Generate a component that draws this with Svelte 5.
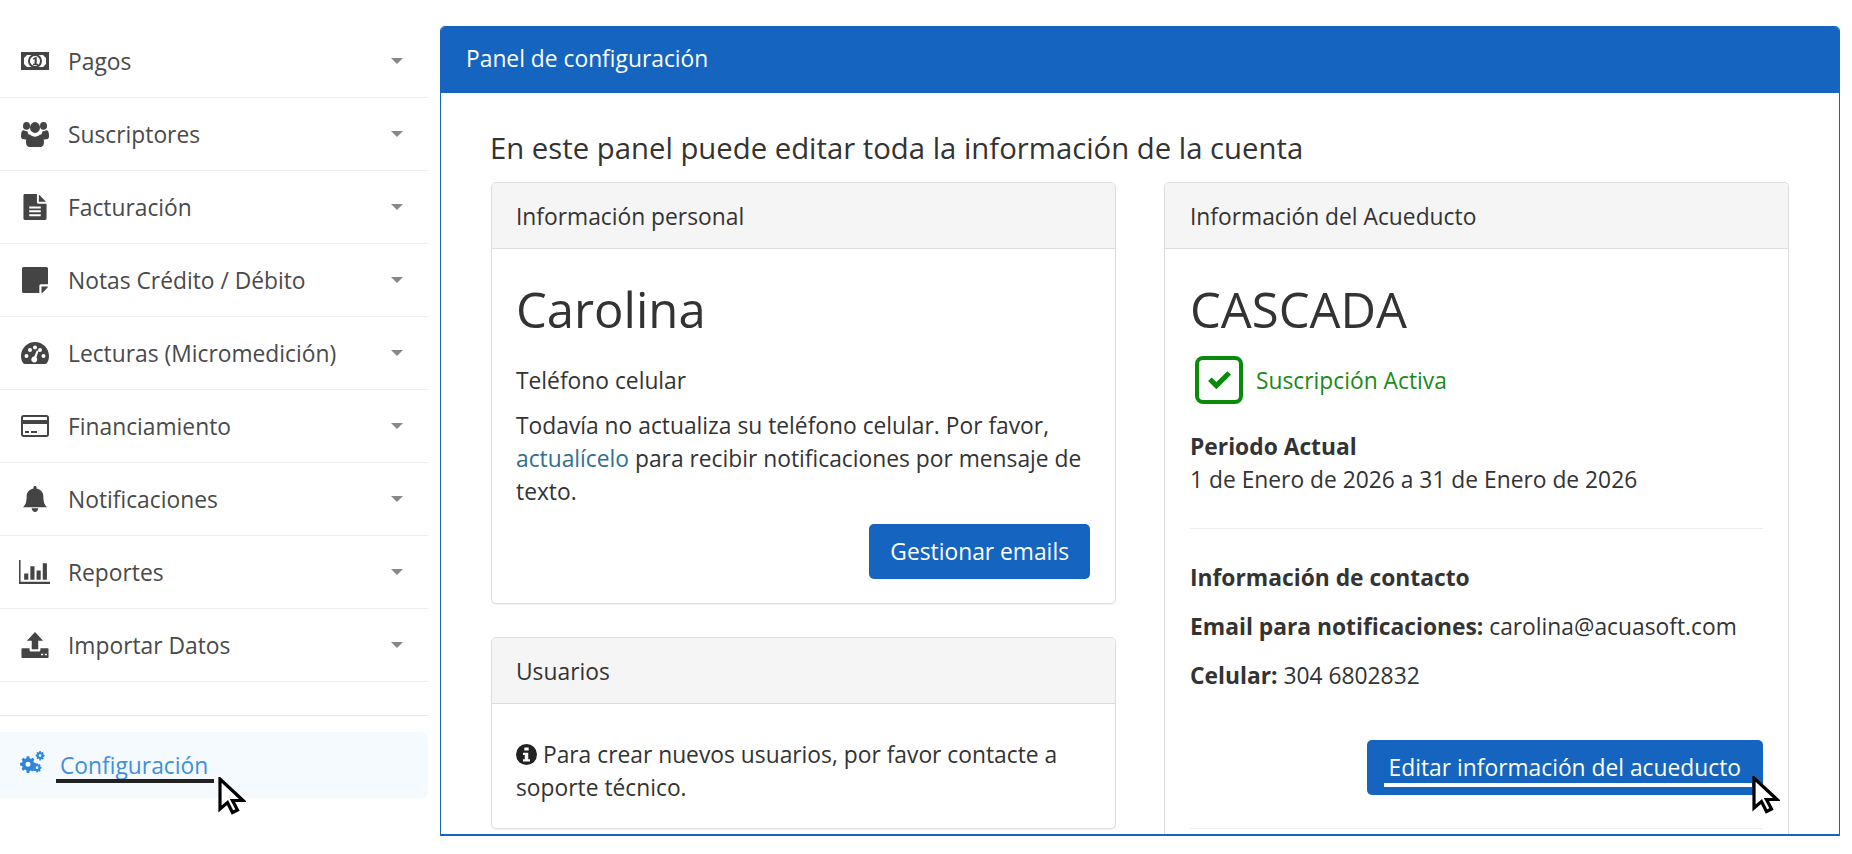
<script>
  const items = [
    { label: 'Pagos', icon: 'money' },
    { label: 'Suscriptores', icon: 'users' },
    { label: 'Facturación', icon: 'file' },
    { label: 'Notas Crédito / Débito', icon: 'note' },
    { label: 'Lecturas (Micromedición)', icon: 'gauge' },
    { label: 'Financiamiento', icon: 'card' },
    { label: 'Notificaciones', icon: 'bell' },
    { label: 'Reportes', icon: 'chart' },
    { label: 'Importar Datos', icon: 'upload' }
  ];
  const gear = 'M12 2h-3l-.5 2.4-1.6.7-2-1.3L2.800 5.900l1.300 2-.7 1.600L1 10v3l2.400.5.7 1.600-1.300 2 2.100 2.100 2-1.300 1.600.7L9 22h3l.5-2.400 1.600-.7 2 1.300 2.100-2.100-1.300-2 .7-1.600L20 13v-3l-2.400-.5-.7-1.600 1.300-2-2.100-2.100-2 1.300-1.600-.7z';
  const hole = 'M10.500 8.500a3 3 0 1 0 0 6 3 3 0 0 0 0-6z';
</script>

{#snippet icon(name)}
  {#if name === 'money'}
    <svg class="ico" viewBox="0 0 28 18"><path fill-rule="evenodd" d="M0 0h28v18H0zM6 3 3 6v6l3 3h16l3-3V6l-3-3z"/><path d="M0 0h6v3H3v12h3v3H0zM28 0h-6v3h3v12h-3v3h6z"/><circle cx="14" cy="9" r="6" fill="none" stroke="currentColor" stroke-width="2"/><path d="M12 6.500 14.500 5h1.200v6.800H17V13h-5v-1.200h1.600V7L12 7.800z"/></svg>
  {:else if name === 'users'}
    <svg class="ico" viewBox="0 0 28 24" preserveAspectRatio="none"><circle cx="5.500" cy="4.500" r="3.500"/><circle cx="22.500" cy="4.500" r="3.500"/><circle cx="14" cy="6" r="5"/><path d="M0 14c0-4 1-5.500 3-5.500 1 .8 2 1.200 3.500 1 .3 2 1.200 3.400 2.500 4.400-2 .8-3.200 2-3.800 3.100C2 17 0 16.500 0 14zM28 14c0-4-1-5.500-3-5.500-1 .8-2 1.200-3.500 1-.3 2-1.200 3.400-2.500 4.400 2 .8 3.200 2 3.800 3.100C26 17 28 16.500 28 14z"/><path d="M9 12.500c1.300 1.300 3 2 5 2s3.700-.7 5-2c2.800 0 4 2.800 4 7 0 2.800-1.500 4.500-3.800 4.500H8.800C6.500 24 5 22.300 5 19.500c0-4.200 1.200-7 4-7z"/></svg>
  {:else if name === 'file'}
    <svg class="ico" viewBox="0 0 24 27"><path fill-rule="evenodd" d="M1.500 0H14v8.500c0 .8.700 1.500 1.500 1.500H24v15.500c0 .8-.7 1.500-1.500 1.500h-21C.7 27 0 26.300 0 25.500v-24C0 .7.700 0 1.500 0zM6 13v2h12v-2zM6 17v2h12v-2zM6 21v2h12v-2z"/><path d="M16 .5 23.500 8H16z"/></svg>
  {:else if name === 'note'}
    <svg class="ico" viewBox="0 0 24 24"><path d="M1.500 0h21c.8 0 1.500.7 1.500 1.500V16h-6.500c-.8 0-1.500.7-1.500 1.500V24H1.500C.7 24 0 23.300 0 22.500v-21C0 .7.700 0 1.500 0z"/><path d="M18 18h6c-.2.6-.5 1.200-1 1.700L19.700 23c-.5.500-1 .8-1.700 1z"/></svg>
  {:else if name === 'gauge'}
    <svg class="ico" viewBox="0 0 28 22"><path fill-rule="evenodd" d="M14 0c7.700 0 14 6.300 14 14 0 2.900-.8 5.500-2.200 7.200-.5.500-1 .8-1.800.8H4c-.8 0-1.300-.3-1.800-.8C.8 19.500 0 16.900 0 14 0 6.300 6.300 0 14 0zM5.500 12a2 2 0 1 0 0 4 2 2 0 0 0 0-4zM9 6a2 2 0 1 0 0 4 2 2 0 0 0 0-4zM14 3.500a2 2 0 1 0 0 4 2 2 0 0 0 0-4zM22.500 12a2 2 0 1 0 0 4 2 2 0 0 0 0-4zM19 6a2 2 0 1 0 0 4 2 2 0 0 0 0-4zM15.800 8.500l-2.600 6a3 3 0 1 0 2.300 1l2-6.700z"/></svg>
  {:else if name === 'card'}
    <svg class="ico" viewBox="0 0 28 22"><path fill-rule="evenodd" d="M2.500 0h23C26.900 0 28 1.100 28 2.500v17c0 1.400-1.100 2.500-2.500 2.500h-23C1.100 22 0 20.900 0 19.500v-17C0 1.100 1.100 0 2.500 0zM2 9v10.500c0 .3.200.5.500.5h23c.3 0 .5-.2.500-.5V9zM2 2.500V5h24V2.500c0-.3-.2-.5-.5-.5h-23c-.3 0-.5.200-.5.500zM4 16h4v2H4zM10 16h6v2h-6z"/></svg>
  {:else if name === 'bell'}
    <svg class="ico" viewBox="0 0 26 28"><path d="M13 0c1 0 1.700.7 1.700 1.700v.9C19 3.400 22 6.700 22 11c0 7 1.500 9.500 4 12H0c2.500-2.500 4-5 4-12 0-4.300 3-7.600 7.300-8.400v-.9C11.300.700 12 0 13 0zM9.500 24h7c0 2.200-1.600 4-3.500 4s-3.500-1.800-3.500-4z"/></svg>
  {:else if name === 'chart'}
    <svg class="ico wide" viewBox="0 0 30 23"><path d="M0 0h1.500v21H30v2H0z"/><path d="M5 13h4v6H5zM11 6h4v13h-4zM17 10h4v9h-4zM23 3h4v16h-4z"/></svg>
  {:else if name === 'upload'}
    <svg class="ico" viewBox="0 0 25 24"><path d="M12.500 0 20 8h-4.500v8h-6V8H5z"/><path fill-rule="evenodd" d="M1 15h6.500v1.500c0 .8.700 1.500 1.500 1.500h7c.8 0 1.500-.7 1.500-1.500V15H24c.6 0 1 .4 1 1v7c0 .6-.4 1-1 1H1c-.6 0-1-.4-1-1v-7c0-.6.400-1 1-1zM18 20v1.500h2V20zM21.500 20v1.500h2V20z"/></svg>
  {/if}
{/snippet}

{#snippet cursor()}
  <svg viewBox="0 0 28 38" width="28" height="38"><path d="M2 2v30l7.500-6.500 5 10 5-2.500-5-9.500H25z" fill="#fff" stroke="#000" stroke-width="3.200" stroke-linejoin="miter"/></svg>
{/snippet}

<div class="page">
  <aside class="side">
    <nav>
      {#each items as it}
        <div class="row">
          <span class="ic">{@render icon(it.icon)}</span>
          <span class="lbl">{it.label}</span>
          <span class="caret"></span>
        </div>
      {/each}
    </nav>
    <div class="config">
      <svg class="cog" viewBox="0 0 33 30">
        <g transform="translate(-1 6) scale(1.1)"><path fill-rule="evenodd" d={gear + hole}/></g>
        <g transform="translate(20 0) scale(.62)"><path fill-rule="evenodd" d={gear + hole}/></g>
        <g transform="translate(16 16) scale(.62)"><path fill-rule="evenodd" d={gear + hole}/></g>
      </svg>
      <span class="cfg-label">Configuración</span>
      <span class="mark dark"></span>
      <span class="cur c1">{@render cursor()}</span>
    </div>
  </aside>

  <main class="panel">
    <header class="panel-h">Panel de configuración</header>
    <div class="panel-b">
      <h4>En este panel puede editar toda la información de la cuenta</h4>
      <div class="cols">
        <div class="col left">
          <section class="card">
            <div class="card-h">Información personal</div>
            <div class="card-b">
              <h2>Carolina</h2>
              <p class="tel">Teléfono celular</p>
              <p class="msg">Todavía no actualiza su teléfono celular. Por favor, <span class="link">actualícelo</span> para recibir notificaciones por mensaje de texto.</p>
              <div class="btn-row"><span class="btn">Gestionar emails</span></div>
            </div>
          </section>
          <section class="card users">
            <div class="card-h">Usuarios</div>
            <div class="card-b">
              <p class="msg">
                <svg class="info" viewBox="0 0 24 24"><path fill-rule="evenodd" d="M12 0a12 12 0 1 1 0 24 12 12 0 0 1 0-24zM9.500 4v3.500h5V4zM8 10v2.500h2v5H8V20h8v-2.500h-2V10z"/></svg>
                Para crear nuevos usuarios, por favor contacte a soporte técnico.
              </p>
            </div>
          </section>
        </div>
        <div class="col">
          <section class="card acu">
            <div class="card-h">Información del Acueducto</div>
            <div class="card-b">
              <h2>CASCADA</h2>
              <div class="status">
                <span class="check"><svg viewBox="0 0 24 20"><path d="M1 10.500 4.500 7 9 11.500 19.500 1 23 4.500 9 18.500z"/></svg></span>
                <span>Suscripción Activa</span>
              </div>
              <p class="strong first">Periodo Actual</p>
              <p>1 de Enero de 2026 a 31 de Enero de 2026</p>
              <hr />
              <p class="strong contact">Información de contacto</p>
              <p class="line"><b>Email para notificaciones:</b> carolina@acuasoft.com</p>
              <p class="line"><b>Celular:</b> 304 6802832</p>
              <div class="btn-row edit">
                <span class="btn">Editar información del acueducto<span class="mark light"></span><span class="cur c2">{@render cursor()}</span></span>
              </div>
              <hr class="last" />
            </div>
          </section>
        </div>
      </div>
    </div>
  </main>
</div>

<style>
  :global(body) { margin: 0; background: #fff; }
  .page {
    display: flex; gap: 12px; width: 1852px; height: 854px; box-sizing: border-box;
    font-family: "Open Sans", sans-serif; font-size: 22.8px; color: #333; overflow: hidden;
  }
  .side { width: 428px; flex: none; padding-top: 25px; }
  .row {
    display: flex; align-items: center; height: 72px; border-bottom: 1px solid #eee; color: #4a4a4a;
  }
  .ic { width: 68px; padding-left: 21px; box-sizing: border-box; flex: none; display: flex; }
  .ico { width: 28px; height: 26px; fill: #444; color: #444; display: block; }
  .ico.wide { width: 31px; margin-left: -2px; }
  .lbl { flex: 1; }
  .caret {
    width: 0; height: 0; margin-right: 25px; border-left: 6.5px solid transparent;
    border-right: 6.5px solid transparent; border-top: 6px solid #888;
  }
  .config {
    position: relative; margin-top: 50px; height: 66px; background: #f5faff; border-radius: 0 6px 6px 0;
    display: flex; align-items: center; color: #3f90dc;
  }
  .config::before {
    content: ""; position: absolute; left: 0; right: 0; top: -17px; border-top: 1px solid #e8e8e8;
  }
  .cog { width: 25px; height: 23px; margin: 0 0 7px 20px; fill: #2f86d8; color: #2f86d8; flex: none; }
  .cfg-label { margin-left: 15px; margin-top: 0; }
  .mark { position: absolute; height: 4px; display: block; }
  .mark.dark { left: 56px; width: 158px; top: 47px; background: #222; }
  .mark.light { left: 17px; width: 368px; top: 43px; background: #fff; }
  .cur { position: absolute; line-height: 0; }
  .c1 { left: 218px; top: 45px; }
  .c2 { left: 385px; top: 36px; }

  .panel {
    width: 1400px; height: 810px; margin-top: 26px; box-sizing: border-box; overflow: hidden;
    border: 1px solid #1565c0; border-bottom-width: 2px; border-radius: 5px 5px 0 0; position: relative;
    display: flex; flex-direction: column;
  }
  .panel-h {
    background: #1565c0; color: #fff; height: 66px; flex: none; display: flex; align-items: center;
    padding: 0 0 3px 25px; box-sizing: border-box;
  }
  .panel-b { padding: 0 0 0 50px; }
  h4 { font-size: 29.3px; font-weight: 400; margin: 0 0 0 -1px; line-height: 39px; padding-top: 36px; height: 53px; color: #333; }
  .cols { display: flex; gap: 48px; }
  .col { width: 625px; display: flex; flex-direction: column; gap: 33px; flex: none; }
  .card { border: 1px solid #ddd; border-radius: 5px; box-shadow: 0 1px 1px rgba(0,0,0,.05); background: #fff; }
  .card-h {
    height: 65px; box-sizing: border-box; background: #f5f5f5; border-bottom: 1px solid #ddd; display: flex; align-items: center;
    padding: 2px 0 0 25px; color: #333; border-radius: 4px 4px 0 0; height: 66px;
  }
  .card-b { padding: 0 25px; }
  .left .card-h { padding-left: 24px; }
  .left .card-b { padding-left: 24px; }
  h2 { font-size: 49px; font-weight: 400; margin: 0; padding-top: 24px; line-height: 72px; color: #333; }
  p { margin: 0; line-height: 33px; }
  .tel { margin-top: 19px; margin-bottom: 12px; }
  .link { color: #31708f; }
  .btn-row { display: flex; justify-content: flex-end; margin-top: 16px; padding-bottom: 24px; }
  .btn {
    position: relative; background: #1565c0; color: #fff; border-radius: 5px; height: 55px; box-sizing: border-box;
    padding: 0 21px; display: flex; align-items: center;
  }
  .users .card-b { padding-top: 34px; padding-bottom: 24px; }
  .info { width: 21px; height: 21px; fill: #222; vertical-align: -2px; }
  .acu { border-bottom: 0; border-radius: 5px 5px 0 0; height: 700px; }
  .status { display: flex; align-items: center; gap: 13px; color: #1a8a1a; margin: 10px 0 0 5px; height: 50px; }
  .check {
    width: 48px; height: 48px; box-sizing: border-box; border: 4px solid #0a8a0a; border-radius: 8px;
    display: flex; align-items: center; justify-content: center;
  }
  .check svg { width: 25px; height: 21px; fill: #0a8a0a; }
  .strong { font-weight: 700; }
  .first { margin-top: 25px; }
  hr { border: 0; border-top: 1px solid #eee; margin: 32px 0 0; }
  .contact { margin-top: 32px; }
  .line { margin-top: 16px; }
  b { font-weight: 700; }
  .edit { margin-top: 48px; padding-bottom: 0; }
  .acu .btn { padding: 0 22px; }
  hr.last { margin-top: 33px; }
</style>
